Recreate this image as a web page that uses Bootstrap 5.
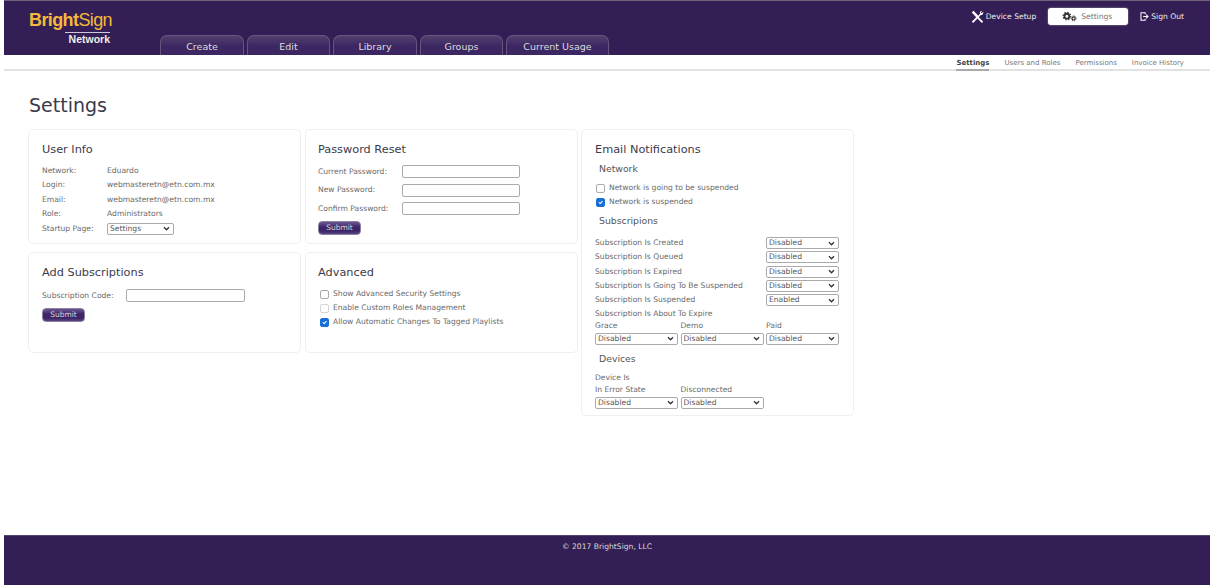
<!DOCTYPE html>
<html lang="en">
<head>
  <meta charset="UTF-8" />
  <meta name="viewport" content="width=device-width, initial-scale=1.0"/>
  <title>BrightSign Network - Settings</title>
  <link href="https://cdn.jsdelivr.net/npm/bootstrap@5.3.0/dist/css/bootstrap.min.css" rel="stylesheet">
  <style>
    html, body { height: 100%; }
    body {
      background: #fff;
      font-family: "DejaVu Sans", Verdana, sans-serif;
      font-size: 7.6px;
      color: #6a6a6a;
      padding-left: 4px;
      overflow: hidden;
    }
    .page-wrap { height: 585px; }
    .top-head {
      height: 55px;
      background: #331f55;
      border-top: 1px solid #6b6378;
    }
    .brand-box { width: 156px; padding: 10px 0 0 25px; line-height: 1; }
    .brand-name { font-family: "Liberation Sans", Arial, sans-serif; font-size: 18px; letter-spacing: -.6px; color: #f4b93c; font-weight: 700; }
    .brand-name span { font-weight: 400; }
    .brand-net {
      width: 45px; margin: 3px 0 0 36px; border-top: 1px solid #cfc8da; padding-top: 1px;
      font-family: "Liberation Sans", Arial, sans-serif; font-weight: 700; font-size: 10.5px; color: #eee; text-align: right; white-space: nowrap;
    }
    .tab-item {
      height: 20px; margin-right: 3px; padding-top: 4px;
      font-size: 9.5px; line-height: 13px; color: #ddd; text-align: center; text-decoration: none;
      background: linear-gradient(#52406f, #3c2762 55%, #3c2762);
      border: 1px solid #66567f; border-bottom: 0;
      border-radius: 7px 7px 0 0;
    }
    .head-links { padding: 7px 26px 0 0; }
    .head-link { font-size: 7.6px; color: #eee; text-decoration: none; white-space: nowrap; height: 17px; line-height: 17px; gap: 2px; }
    .head-active {
      width: 80px; margin: 0 12px; padding-right: 2px; gap: 4px;
      background: #fff; color: #777; border-radius: 3px; box-shadow: 0 0 2px #aaa;
    }
    .sub-nav {
      height: 16px; padding-right: 26px; gap: 15px;
      border-bottom: 2px solid #e2e2e2;
      font-size: 7px; line-height: 17px; color: #777;
    }
    .sub-nav a { color: #777; text-decoration: none; white-space: nowrap; height: 16px; }
    .sub-nav a.sub-on { color: #444; font-weight: 700; border-bottom: 2px solid #aaa; }
    .page-title { font-size: 19px; font-weight: 400; color: #3b3a4a; margin: 22px 0 0 25px; line-height: 24px; height: 36px; }
    .panels { margin-left: 24px; gap: 4px; }
    .panel-col { width: 273px; gap: 8px; }
    .panel-box { border: 1px solid #efefef; border-radius: 5px; padding: 0 13px; background: #fff; }
    .pad-mid { padding-left: 12px; }
    .h-a { height: 115px; }
    .h-b { height: 101px; }
    .h-c { height: 287px; width: 273px; margin-left: -1px; padding-right: 14px; }
    .panel-title { font-size: 11.3px; font-weight: 400; color: #3b3a4a; margin: 13px 0 7px; line-height: 14px; }
    .info-row { height: 14.4px; line-height: 14.4px; white-space: nowrap; }
    .lbl-a { width: 65px; }
    .lbl-b { width: 84px; }
    .lbl-c { width: 84px; }
    .sel-box {
      appearance: none;
      font-family: inherit; font-size: 7.6px; color: #555; height: 12px; padding: 0 0 0 2px;
      border: 1px solid #aaa; border-radius: 2px; line-height: 10px;
      background: #fff url("data:image/svg+xml,%3csvg xmlns='http://www.w3.org/2000/svg' viewBox='0 0 8 6'%3e%3cpath fill='none' stroke='%23333' stroke-width='1.6' d='M1 1.5l3 3 3-3'/%3e%3c/svg%3e") no-repeat right 3px center / 7px 5px;
    }
    .txt-box { height: 13px; width: 118px; border: 1px solid #aaa; border-radius: 2px; padding: 0; background: #fff; }
    .txt-code { width: 119px; }
    .go-btn {
      width: 43px; height: 14px; padding: 0; font-size: 7.5px; line-height: 12px; color: #ddd; display: block;
      background: linear-gradient(#6a5590, #3d2568 45%, #3d2568 75%, #584680);
      border: 1px solid #8a80a0; border-radius: 4px;
    }
    .tick-row { height: 14px; line-height: 14px; white-space: nowrap; }
    .tick-row .form-check-input { width: 9px; height: 9px; margin: 0 4px 0 1px; flex: none; border-color: #aaa; border-radius: 2px; }
    .pad-mid .tick-row .form-check-input { margin-left: 2px; }
    .tick-row .form-check-input:checked { background-color: #1a6fd6; border-color: #1a6fd6; }
    .sub-title { font-size: 9.3px; color: #555; font-weight: 400; margin: 0; line-height: 12px; }
    .sel-wide { width: 73px; }
    .sel-mid { width: 83px; }
    .notif-row { height: 14.25px; line-height: 14.25px; white-space: nowrap; }
    .tri-head { height: 12px; line-height: 12px; margin-bottom: 1px; white-space: nowrap; }
    .tri-col { gap: 2.5px; }
    .tri-up { margin-top: -2px; }
    .foot-bar {
      height: 50px; margin-top: auto; background: #331f55; color: #ddd;
      border-top: 1px solid #55456f; text-align: center; font-size: 7.6px; line-height: 22px;
    }
  </style>
</head>
<body>
  <div class="page-wrap d-flex flex-column">
    <header class="top-head d-flex">
      <div class="brand-box flex-shrink-0">
        <div class="brand-name">Bright<span>Sign</span></div>
        <div class="brand-net">Network</div>
      </div>
      <nav class="d-flex align-items-end align-self-end">
        <a class="tab-item" style="width:84px" href="#">Create</a>
        <a class="tab-item" style="width:83px" href="#">Edit</a>
        <a class="tab-item" style="width:84px" href="#">Library</a>
        <a class="tab-item" style="width:83px" href="#">Groups</a>
        <a class="tab-item" style="width:103px" href="#">Current Usage</a>
      </nav>
      <div class="head-links d-flex align-items-start ms-auto">
        <a class="head-link d-flex align-items-center" href="#">
          <svg width="13" height="13" viewBox="0 0 16 16" fill="#fff"><path d="M1 3l2-2 6 6 2.2-2.6a3 3 0 0 1 .6-3L14 1l-2 2 1 1 2-2a3.5 3.5 0 0 1-3.4 4.6L9.6 9l5.4 5.4-1.6 1.6L8 10.6 2.6 16 1 14.4 6.4 9z"/></svg>
          Device Setup
        </a>
        <a class="head-link head-active d-flex align-items-center justify-content-center" href="#">
          <svg width="15" height="11" viewBox="0 0 20 14" fill="none" stroke="#333"><circle cx="6.5" cy="6.5" r="3.2" stroke-width="2.4"/><circle cx="6.5" cy="6.5" r="5" stroke-width="1.6" stroke-dasharray="2 1.9"/><circle cx="15.5" cy="9.5" r="2" stroke-width="1.6"/><circle cx="15.5" cy="9.5" r="3.4" stroke-width="1.2" stroke-dasharray="1.6 1.4"/></svg>
          Settings
        </a>
        <a class="head-link d-flex align-items-center" href="#">
          <svg width="9" height="11" viewBox="0 0 14 15" fill="none" stroke="#fff" stroke-width="1.6"><path d="M8 4V1.5H1.5v12H8V11"/><path d="M5 7.5h7M9.5 4.5l3 3-3 3"/></svg>
          Sign Out
        </a>
      </div>
    </header>

    <div class="sub-nav d-flex justify-content-end">
      <a class="sub-on" href="#">Settings</a>
      <a href="#">Users and Roles</a>
      <a href="#">Permissions</a>
      <a href="#">Invoice History</a>
    </div>

    <h1 class="page-title">Settings</h1>

    <div class="panels d-flex align-items-start">
      <div class="panel-col d-flex flex-column">
        <section class="panel-box h-a">
          <h2 class="panel-title">User Info</h2>
          <div class="info-row d-flex"><span class="lbl-a">Network:</span><span>Eduardo</span></div>
          <div class="info-row d-flex"><span class="lbl-a">Login:</span><span>webmasteretn@etn.com.mx</span></div>
          <div class="info-row d-flex"><span class="lbl-a">Email:</span><span>webmasteretn@etn.com.mx</span></div>
          <div class="info-row d-flex"><span class="lbl-a">Role:</span><span>Administrators</span></div>
          <div class="info-row d-flex align-items-center"><span class="lbl-a">Startup Page:</span><select class="sel-box" style="width:67px"><option>Settings</option></select></div>
        </section>
        <section class="panel-box h-b">
          <h2 class="panel-title" style="margin-bottom:9px">Add Subscriptions</h2>
          <div class="d-flex align-items-center" style="margin-bottom:6px"><span class="lbl-c">Subscription Code:</span><input class="txt-box txt-code" type="text"></div>
          <button class="go-btn" type="button">Submit</button>
        </section>
      </div>

      <div class="panel-col d-flex flex-column">
        <section class="panel-box pad-mid h-a">
          <h2 class="panel-title" style="margin-bottom:8px">Password Reset</h2>
          <div class="d-flex align-items-center" style="margin-bottom:5.5px"><span class="lbl-b">Current Password:</span><input class="txt-box" type="password"></div>
          <div class="d-flex align-items-center" style="margin-bottom:5.5px"><span class="lbl-b">New Password:</span><input class="txt-box" type="password"></div>
          <div class="d-flex align-items-center" style="margin-bottom:5.5px"><span class="lbl-b">Confirm Password:</span><input class="txt-box" type="password"></div>
          <button class="go-btn" type="button">Submit</button>
        </section>
        <section class="panel-box pad-mid h-b">
          <h2 class="panel-title">Advanced</h2>
          <label class="tick-row d-flex align-items-center"><input class="form-check-input" type="checkbox">Show Advanced Security Settings</label>
          <label class="tick-row d-flex align-items-center"><input class="form-check-input" type="checkbox" disabled>Enable Custom Roles Management</label>
          <label class="tick-row d-flex align-items-center"><input class="form-check-input" type="checkbox" checked>Allow Automatic Changes To Tagged Playlists</label>
        </section>
      </div>

      <section class="panel-box h-c">
        <h2 class="panel-title" style="margin-bottom:6px">Email Notifications</h2>
        <h3 class="sub-title ms-1" style="margin-bottom:6px">Network</h3>
        <label class="tick-row d-flex align-items-center"><input class="form-check-input" type="checkbox">Network is going to be suspended</label>
        <label class="tick-row d-flex align-items-center"><input class="form-check-input" type="checkbox" checked>Network is suspended</label>
        <h3 class="sub-title ms-1" style="margin:6px 0 9px">Subscripions</h3>
        <div class="notif-row d-flex justify-content-between align-items-center"><span>Subscription Is Created</span><select class="sel-box sel-wide"><option>Disabled</option></select></div>
        <div class="notif-row d-flex justify-content-between align-items-center"><span>Subscription Is Queued</span><select class="sel-box sel-wide"><option>Disabled</option></select></div>
        <div class="notif-row d-flex justify-content-between align-items-center"><span>Subscription Is Expired</span><select class="sel-box sel-wide"><option>Disabled</option></select></div>
        <div class="notif-row d-flex justify-content-between align-items-center"><span>Subscription Is Going To Be Suspended</span><select class="sel-box sel-wide"><option>Disabled</option></select></div>
        <div class="notif-row d-flex justify-content-between align-items-center"><span>Subscription Is Suspended</span><select class="sel-box sel-wide"><option>Enabled</option></select></div>
        <div class="notif-row">Subscription Is About To Expire</div>
        <div class="d-flex tri-col tri-up">
          <div><div class="tri-head">Grace</div><select class="sel-box sel-mid d-block"><option>Disabled</option></select></div>
          <div><div class="tri-head">Demo</div><select class="sel-box sel-mid d-block"><option>Disabled</option></select></div>
          <div><div class="tri-head">Paid</div><select class="sel-box sel-wide d-block"><option>Disabled</option></select></div>
        </div>
        <h3 class="sub-title ms-1" style="margin:8px 0 7px">Devices</h3>
        <div class="tri-head" style="margin-bottom:0">Device Is</div>
        <div class="d-flex tri-col">
          <div><div class="tri-head">In Error State</div><select class="sel-box sel-mid d-block"><option>Disabled</option></select></div>
          <div><div class="tri-head">Disconnected</div><select class="sel-box sel-mid d-block"><option>Disabled</option></select></div>
        </div>
      </section>
    </div>

    <footer class="foot-bar">&copy; 2017 BrightSign, LLC</footer>
  </div>
  <script src="https://cdn.jsdelivr.net/npm/bootstrap@5.3.0/dist/js/bootstrap.bundle.min.js"></script>
</body>
</html>
